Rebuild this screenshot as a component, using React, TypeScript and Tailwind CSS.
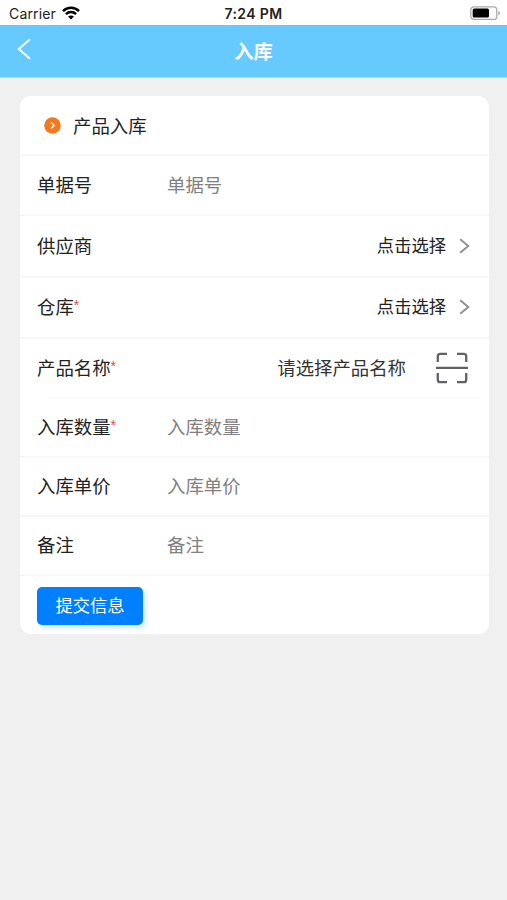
import type { ReactNode } from "react";

function Row({
  label,
  required,
  className,
  children,
}: {
  label: string;
  required?: boolean;
  className: string;
  children: ReactNode;
}) {
  return (
    <div className={`flex items-center pl-[17px] pt-px ${className}`}>
      <div className="flex w-[130px] shrink-0 text-[18.4px] text-[#222]">
        <span>{label}</span>
        {required && <span className="text-[14px] leading-[23px] text-[#dd4b45]">*</span>}
      </div>
      {children}
    </div>
  );
}

function Hint({ text }: { text: string }) {
  return <div className="text-[18.4px] text-[#808080]">{text}</div>;
}

function Picker() {
  return (
    <div className="flex flex-1 items-center justify-end pr-[19px]">
      <span className="text-[17.3px] text-[#222]">点击选择</span>
      <svg className="-mt-[2px] ml-[13px]" width="11" height="16" viewBox="0 0 11 16" fill="none" stroke="#8c9196" strokeWidth="1.9">
        <path d="M1.2 1.2 9.3 8l-8.1 6.8" />
      </svg>
    </div>
  );
}

export default function App() {
  return (
    <div className="h-[900px] w-[507px] overflow-hidden bg-[#f0f0f0] font-['Liberation_Sans','Noto_Sans_CJK_SC',sans-serif]">
      <div className="grid h-[25px] grid-cols-3 items-center bg-white pt-[2px] font-[Inter,sans-serif] text-[14px] text-[#222]">
        <div className="flex items-center pl-[9px]">
          <span className="tracking-[0.15px]">Carrier</span>
          <svg className="-mt-[2px] ml-[6px]" width="18" height="14" viewBox="0 0 18 14" fill="none" stroke="#000" strokeWidth="2.4">
            <path d="M1 5.1C5.5.6 12.5.6 17 5.1" />
            <path d="M3.9 8.1c2.9-2.8 7.300-2.8 10.200 0" />
            <path d="M9 13.5 6.1 10.6c1.600-1.500 4.200-1.500 5.800 0Z" fill="#000" stroke="none" />
          </svg>
        </div>
        <div className="text-center font-semibold tracking-[0.35px]">7:24 PM</div>
        <div className="flex justify-end pr-[6px]">
          <svg className="-mt-[2px]" width="31" height="14" viewBox="0 0 31 14">
            <rect x="0.8" y="0.8" width="26" height="12.6" rx="3.2" fill="#fff" stroke="#aaa" strokeWidth="1.3" />
            <rect x="2.7" y="2.600" width="16.3" height="9" rx="1.5" fill="#000" />
            <path d="M28.3 5v4.4c2.2-.8 2.2-3.600 0-4.400Z" fill="#aaa" />
          </svg>
        </div>
      </div>

      <div className="grid h-[53px] grid-cols-[60px_1fr_60px] items-center border-b border-[#a9ddfa] bg-[#66caff]">
        <svg className="-mt-[4px] ml-[17px]" width="15" height="22" viewBox="0 0 15 22" fill="none" stroke="#fff" strokeWidth="1.9">
          <path d="M13 1.2 1.8 11 13 20.8" />
        </svg>
        <div className="pt-[4px] text-center text-[19.3px] font-bold text-white">入库</div>
      </div>

      <div className="mx-[20px] mt-[18px] h-[538px] w-[469px] overflow-hidden rounded-[11px] bg-white">
        <div className="flex h-[60px] items-center border-b-2 border-[#f7f7f7] pl-[24px]">
          <svg width="17" height="17" viewBox="0 0 17 17" fill="none">
            <circle cx="8.5" cy="8.5" r="8.3" fill="#f17a1d" />
            <path d="m7 5.5 3.3 3-3.3 3" stroke="#fff" strokeWidth="1.5" />
          </svg>
          <span className="ml-[12px] pt-[3px] text-[18.4px] text-[#222]">产品入库</span>
        </div>
        <Row label="单据号" className="h-[60px] border-b-2 border-[#f7f7f7]">
          <Hint text="单据号" />
        </Row>
        <Row label="供应商" className="h-[62px] border-b-2 border-[#f7f7f7]">
          <Picker />
        </Row>
        <Row label="仓库" required className="h-[61px] border-b-2 border-[#f7f7f7]">
          <Picker />
        </Row>
        <Row label="产品名称" required className="h-[58px]">
          <div className="flex flex-1 items-center justify-end pr-[21px]">
            <span className="text-[18.4px] text-[#333]">请选择产品名称</span>
            <svg className="-mt-[2px] ml-[30px]" width="32" height="32" viewBox="0 0 32 32" fill="none" stroke="#606266" strokeWidth="2.3">
              <path d="M1.8 10V4.3Q1.8 1.8 4.3 1.8H11M21 1.8h6.700q2.500 0 2.500 2.500V10M30.200 21v6.700q0 2.500-2.500 2.500H21M11 30.200H4.300q-2.500 0-2.500-2.500V21M0 15.900h32" />
            </svg>
          </div>
        </Row>
        <div className="ml-[27px] mr-[10px] h-px bg-[#fafafa]" />
        <Row label="入库数量" required className="h-[60px] border-b-2 border-[#f7f7f7]">
          <Hint text="入库数量" />
        </Row>
        <Row label="入库单价" className="h-[59px] border-b-2 border-[#f7f7f7]">
          <Hint text="入库单价" />
        </Row>
        <Row label="备注" className="h-[59px] border-b-2 border-[#f7f7f7]">
          <Hint text="备注" />
        </Row>
        <div className="pl-[17px] pt-[11px]">
          <button className="block h-[38px] w-[106px] rounded-[5px] bg-[#007fff] pt-[2px] text-[17.3px] text-white shadow-[3px_3px_4px_rgba(0,127,255,0.18)]">
            提交信息
          </button>
        </div>
      </div>
    </div>
  );
}
